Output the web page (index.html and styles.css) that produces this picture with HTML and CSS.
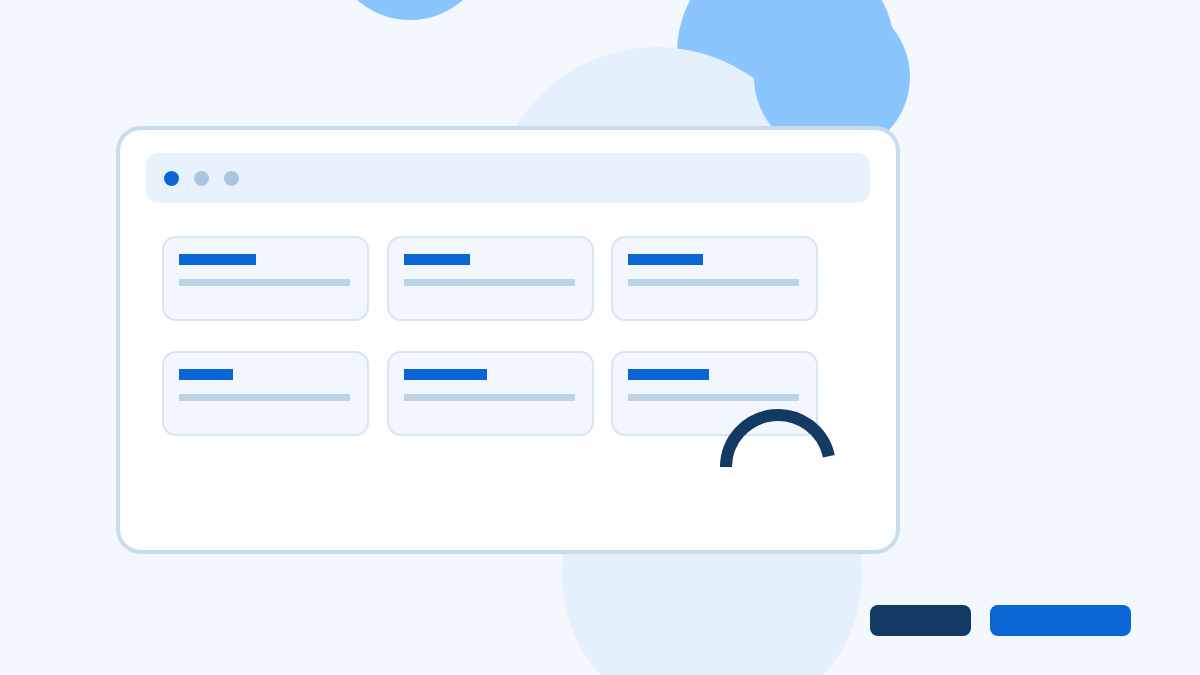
FILE: index.html
```html
<!DOCTYPE html>
<html lang="en">
<head>
<meta charset="utf-8">
<title>Dashboard illustration</title>
<link rel="stylesheet" href="styles.css">
</head>
<body>
<div class="stage">
  <div class="blob blob-top"></div>
  <div class="blob blob-blue-big"></div>
  <div class="blob blob-light-top"></div>
  <div class="blob blob-blue-small"></div>
  <div class="blob blob-light-bottom"></div>

  <div class="window">
    <div class="window-bar">
      <span class="dot dot-active"></span>
      <span class="dot"></span>
      <span class="dot"></span>
    </div>
    <div class="cards">
      <div class="card"><div class="card-title" style="width:77px"></div><div class="card-line"></div></div>
      <div class="card"><div class="card-title" style="width:66px"></div><div class="card-line"></div></div>
      <div class="card"><div class="card-title" style="width:75px"></div><div class="card-line"></div></div>
      <div class="card"><div class="card-title" style="width:54px"></div><div class="card-line"></div></div>
      <div class="card"><div class="card-title" style="width:83px"></div><div class="card-line"></div></div>
      <div class="card"><div class="card-title" style="width:81px"></div><div class="card-line"></div></div>
    </div>
  </div>

  <svg class="spinner" width="128" height="128" viewBox="0 0 128 128" aria-hidden="true">
    <path d="M 12 64 A 52 52 0 0 1 114.86 53.19" fill="none" stroke="#123a63" stroke-width="12"/>
  </svg>

  <div class="actions">
    <span class="btn btn-dark"></span>
    <span class="btn btn-primary"></span>
  </div>
</div>
</body>
</html>
```
FILE: styles.css
```css
* { box-sizing: border-box; }
html, body { margin: 0; padding: 0; }
body {
  font-family: "Liberation Sans", Arial, sans-serif;
  background: #f3f8fe;
}
.stage {
  position: relative;
  width: 1200px;
  height: 675px;
  overflow: hidden;
  background: #f3f8fe;
  display: flex;
  flex-direction: column;
  padding: 126px 0 0 116px;
}
.blob {
  position: absolute;
  border-radius: 50%;
}
.blob-top {
  left: 330px; top: -140px; width: 160px; height: 160px;
  background: #8ac5fd;
}
.blob-blue-big {
  left: 677px; top: -57px; width: 218px; height: 218px;
  background: #8ac5fd;
}
.blob-light-top {
  left: 492px; top: 47px; width: 330px; height: 330px;
  background: #e4f0fc;
}
.blob-blue-small {
  left: 754px; top: -1px; width: 156px; height: 156px;
  background: #8ac5fd;
}
.blob-light-bottom {
  left: 562px; top: 425px; width: 300px; height: 300px;
  background: #e4f0fc;
}
.window {
  position: relative;
  z-index: 2;
  width: 784px;
  height: 428px;
  background: #ffffff;
  border: 4px solid #c8dcee;
  border-radius: 25px;
  padding: 23px 26px;
}
.window-bar {
  height: 50px;
  background: #e8f2fc;
  border-radius: 12px;
  display: flex;
  align-items: center;
  gap: 15px;
  padding-left: 18px;
}
.dot {
  width: 15px;
  height: 15px;
  border-radius: 50%;
  background: #a9c6e0;
}
.dot-active { background: #0a66d4; }
.cards {
  margin: 33px 0 0 16px;
  display: grid;
  grid-template-columns: repeat(3, 207px);
  grid-auto-rows: 85px;
  column-gap: 17.5px;
  row-gap: 30px;
}
.card {
  background: #f2f7fd;
  border: 2px solid #d4e5f4;
  border-radius: 14px;
  padding: 16px 15px;
}
.card-title {
  height: 11px;
  background: #0a66d4;
}
.card-line {
  margin-top: 14px;
  width: 171px;
  height: 7px;
  background: #bcd3e7;
}
.spinner {
  position: absolute;
  z-index: 3;
  left: 714px;
  top: 403px;
}
.actions {
  position: relative;
  z-index: 2;
  display: flex;
  justify-content: flex-end;
  gap: 19px;
  margin-top: 51px;
  padding-right: 69px;
}
.btn {
  height: 31px;
  border-radius: 8px;
}
.btn-dark { width: 101px; background: #123a63; }
.btn-primary { width: 141px; background: #0a66d4; }
```
